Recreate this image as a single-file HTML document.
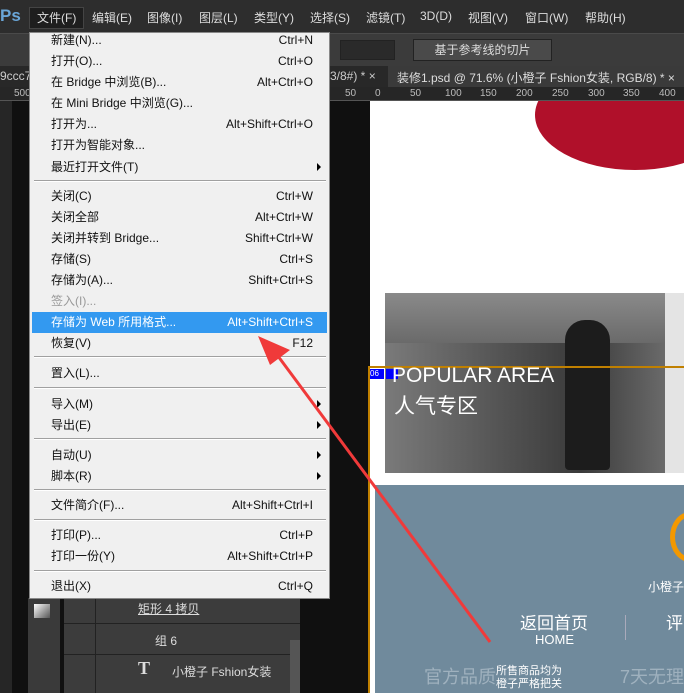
<!DOCTYPE html><html><head><meta charset="utf-8"><style>
*{margin:0;padding:0;box-sizing:border-box}
body{width:684px;height:693px;overflow:hidden;background:#101010;font-family:"Liberation Sans","Noto Sans CJK SC",sans-serif;font-size:12px;position:relative}
.a{position:absolute}
.mb{left:0;top:0;width:684px;height:33px;background:#2d2d2d;color:#ddd}
.mb span{position:absolute;top:9px}
.ob{left:0;top:33px;width:684px;height:33px;background:#3b3b3b;border-top:1px solid #4a4a4a}
.tabs{left:0;top:66px;width:684px;height:21px;background:#282828;color:#ccc}
.ruler{left:0;top:87px;width:684px;height:14px;background:#262626;color:#bbb;font-size:10px;border-bottom:1px solid #555}
.menu{left:29px;top:32px;width:301px;height:567px;background:#f0f0f0;border:1px solid #888;color:#111}
.it{position:absolute;left:21px;width:260px;height:21px;line-height:21px}
.it b{position:absolute;right:-2px;font-weight:normal}
.sep{position:absolute;left:4px;width:292px;height:2px;border-top:1px solid #a0a0a0;border-bottom:1px solid #fff}
.arr{position:absolute;right:8px;width:0;height:0;border-left:4px solid #000;border-top:4px solid transparent;border-bottom:4px solid transparent}
</style></head><body>
<div class="a mb">
<span style="left:0;top:6px;color:#6aa6d8;font-weight:bold;font-size:17px">Ps</span>
<div class="a" style="left:29px;top:7px;width:55px;height:22px;background:#1e1e1e;border:1px solid #444"></div>
<span style="left:37px">文件(F)</span><span style="left:92px">编辑(E)</span><span style="left:147px">图像(I)</span><span style="left:199px">图层(L)</span><span style="left:254px">类型(Y)</span><span style="left:310px">选择(S)</span><span style="left:366px">滤镜(T)</span><span style="left:420px">3D(D)</span><span style="left:468px">视图(V)</span><span style="left:525px">窗口(W)</span><span style="left:585px">帮助(H)</span>
</div>
<div class="a ob">
<div class="a" style="left:340px;top:6px;width:55px;height:20px;background:#2a2a2a;border:1px solid #222"></div>
<div class="a" style="left:413px;top:5px;width:139px;height:22px;background:#4a4a4a;border:1px solid #222;color:#ddd;text-align:center;line-height:20px">基于参考线的切片</div>
</div>
<div class="a tabs">
<span class="a" style="left:0;top:3px">9ccc7</span><span class="a" style="left:330px;top:3px">3/8#) * ×</span>
<div class="a" style="left:388px;top:0;width:296px;height:21px;background:#3a3a3a"></div>
<span class="a" style="left:397px;top:3px;color:#ddd">装修1.psd @ 71.6% (小橙子 Fshion女装, RGB/8) * ×</span>
</div>
<div class="a ruler">
<span class="a" style="left:14px;top:1px">500</span><span class="a" style="left:345px;top:1px">50</span><span class="a" style="left:375px;top:1px">0</span><span class="a" style="left:410px;top:1px">50</span><span class="a" style="left:445px;top:1px">100</span><span class="a" style="left:480px;top:1px">150</span><span class="a" style="left:516px;top:1px">200</span><span class="a" style="left:552px;top:1px">250</span><span class="a" style="left:588px;top:1px">300</span><span class="a" style="left:623px;top:1px">350</span><span class="a" style="left:659px;top:1px">400</span>
</div>
<div class="a" style="left:0;top:101px;width:12px;height:592px;background:#262626"></div>
<div class="a" style="left:370px;top:101px;width:314px;height:592px;background:#fff"></div>
<div class="a" style="left:535px;top:60px;width:200px;height:110px;border-radius:50%;background:#b0102a;clip-path:inset(41px 0 0 0)"></div>
<div class="a" style="left:385px;top:293px;width:280px;height:180px;background:linear-gradient(90deg,#7a7a7a,#555 40%,#3a3a3a 70%,#6a6a6a)"></div>
<div class="a" style="left:385px;top:293px;width:280px;height:50px;background:linear-gradient(#8a8a8a,#6a6a6a)"></div>
<div class="a" style="left:565px;top:320px;width:45px;height:150px;background:#1c1c1c;border-radius:20px 20px 4px 4px"></div>
<div class="a" style="left:665px;top:293px;width:19px;height:180px;background:#e4e4e4"></div>
<div class="a" style="left:368px;top:366px;width:316px;height:2px;background:#c08000"></div>
<div class="a" style="left:368px;top:366px;width:2px;height:327px;background:#c08000"></div>
<div class="a" style="left:370px;top:369px;width:14px;height:10px;background:#00f;color:#fff;font-size:8px;line-height:10px">06</div>
<div class="a" style="left:386px;top:369px;width:12px;height:10px;background:#00f"></div>
<div class="a" style="left:392px;top:364px;color:#fff;font-size:21px">POPULAR AREA</div>
<div class="a" style="left:394px;top:390px;color:#fff;font-size:21px">人气专区</div>
<div class="a" style="left:375px;top:485px;width:309px;height:208px;background:#708a9c"></div>
<div class="a" style="left:670px;top:512px;width:40px;height:50px;border:5px solid #f39800;border-radius:50%"></div>
<div class="a" style="left:648px;top:578px;color:#fff;font-size:12px">小橙子</div>
<div class="a" style="left:520px;top:609px;color:#fff;font-size:17px">返回首页</div>
<div class="a" style="left:535px;top:632px;color:#fff;font-size:13px">HOME</div>
<div class="a" style="left:625px;top:615px;width:1px;height:25px;background:#aab"></div>
<div class="a" style="left:666px;top:609px;color:#fff;font-size:17px">评</div>
<div class="a" style="left:424px;top:663px;color:#9fb1be;font-size:18px">官方品质</div>
<div class="a" style="left:496px;top:665px;color:#fff;font-size:11px;line-height:13px">所售商品均为<br>橙子严格把关</div>
<div class="a" style="left:620px;top:663px;color:#9fb1be;font-size:18px">7天无理</div>
<div class="a" style="left:28px;top:598px;width:32px;height:95px;background:#3a3a3a"></div>
<div class="a" style="left:64px;top:598px;width:236px;height:95px;background:#3c3c3c"></div>
<div class="a" style="left:64px;top:623px;width:236px;height:1px;background:#222"></div>
<div class="a" style="left:64px;top:654px;width:236px;height:1px;background:#222"></div>
<div class="a" style="left:95px;top:598px;width:1px;height:95px;background:#222"></div>
<div class="a" style="left:290px;top:640px;width:10px;height:53px;background:#555"></div>
<div class="a" style="left:138px;top:600px;color:#ddd;text-decoration:underline">矩形 4 拷贝</div>
<div class="a" style="left:155px;top:632px;color:#ddd">组 6</div>
<div class="a" style="left:172px;top:663px;color:#ddd">小橙子 Fshion女装</div>
<div class="a" style="left:138px;top:658px;color:#ddd;font-family:'Liberation Serif',serif;font-size:18px;font-weight:bold">T</div>
<div class="a" style="left:34px;top:604px;width:16px;height:14px;background:linear-gradient(135deg,#fff,#555)"></div>
<div class="a menu">
<div class="it" style="top:-3px">新建(N)...<b>Ctrl+N</b></div>
<div class="it" style="top:18px">打开(O)...<b>Ctrl+O</b></div>
<div class="it" style="top:39px">在 Bridge 中浏览(B)...<b>Alt+Ctrl+O</b></div>
<div class="it" style="top:60px">在 Mini Bridge 中浏览(G)...</div>
<div class="it" style="top:81px">打开为...<b>Alt+Shift+Ctrl+O</b></div>
<div class="it" style="top:102px">打开为智能对象...</div>
<div class="it" style="top:124px">最近打开文件(T)</div><div class="arr" style="top:130px"></div>
<div class="sep" style="top:147px"></div>
<div class="it" style="top:153px">关闭(C)<b>Ctrl+W</b></div>
<div class="it" style="top:174px">关闭全部<b>Alt+Ctrl+W</b></div>
<div class="it" style="top:195px">关闭并转到 Bridge...<b>Shift+Ctrl+W</b></div>
<div class="it" style="top:216px">存储(S)<b>Ctrl+S</b></div>
<div class="it" style="top:237px">存储为(A)...<b>Shift+Ctrl+S</b></div>
<div class="it" style="top:258px;color:#999">签入(I)...</div>
<div class="a" style="left:2px;top:279px;width:295px;height:21px;background:#3399f0"></div>
<div class="it" style="top:279px;color:#fff">存储为 Web 所用格式...<b>Alt+Shift+Ctrl+S</b></div>
<div class="it" style="top:300px">恢复(V)<b>F12</b></div>
<div class="sep" style="top:323px"></div>
<div class="it" style="top:330px">置入(L)...</div>
<div class="sep" style="top:354px"></div>
<div class="it" style="top:361px">导入(M)</div><div class="arr" style="top:367px"></div>
<div class="it" style="top:382px">导出(E)</div><div class="arr" style="top:388px"></div>
<div class="sep" style="top:405px"></div>
<div class="it" style="top:412px">自动(U)</div><div class="arr" style="top:418px"></div>
<div class="it" style="top:433px">脚本(R)</div><div class="arr" style="top:439px"></div>
<div class="sep" style="top:456px"></div>
<div class="it" style="top:462px">文件简介(F)...<b>Alt+Shift+Ctrl+I</b></div>
<div class="sep" style="top:486px"></div>
<div class="it" style="top:492px">打印(P)...<b>Ctrl+P</b></div>
<div class="it" style="top:513px">打印一份(Y)<b>Alt+Shift+Ctrl+P</b></div>
<div class="sep" style="top:537px"></div>
<div class="it" style="top:543px">退出(X)<b>Ctrl+Q</b></div>
</div>
<svg class="a" style="left:0;top:0" width="684" height="693"><line x1="490" y1="642" x2="272" y2="348" stroke="#f03a3a" stroke-width="3"/><polygon points="258,336 290,350 270,365" fill="#f03a3a"/></svg>
</body></html>
